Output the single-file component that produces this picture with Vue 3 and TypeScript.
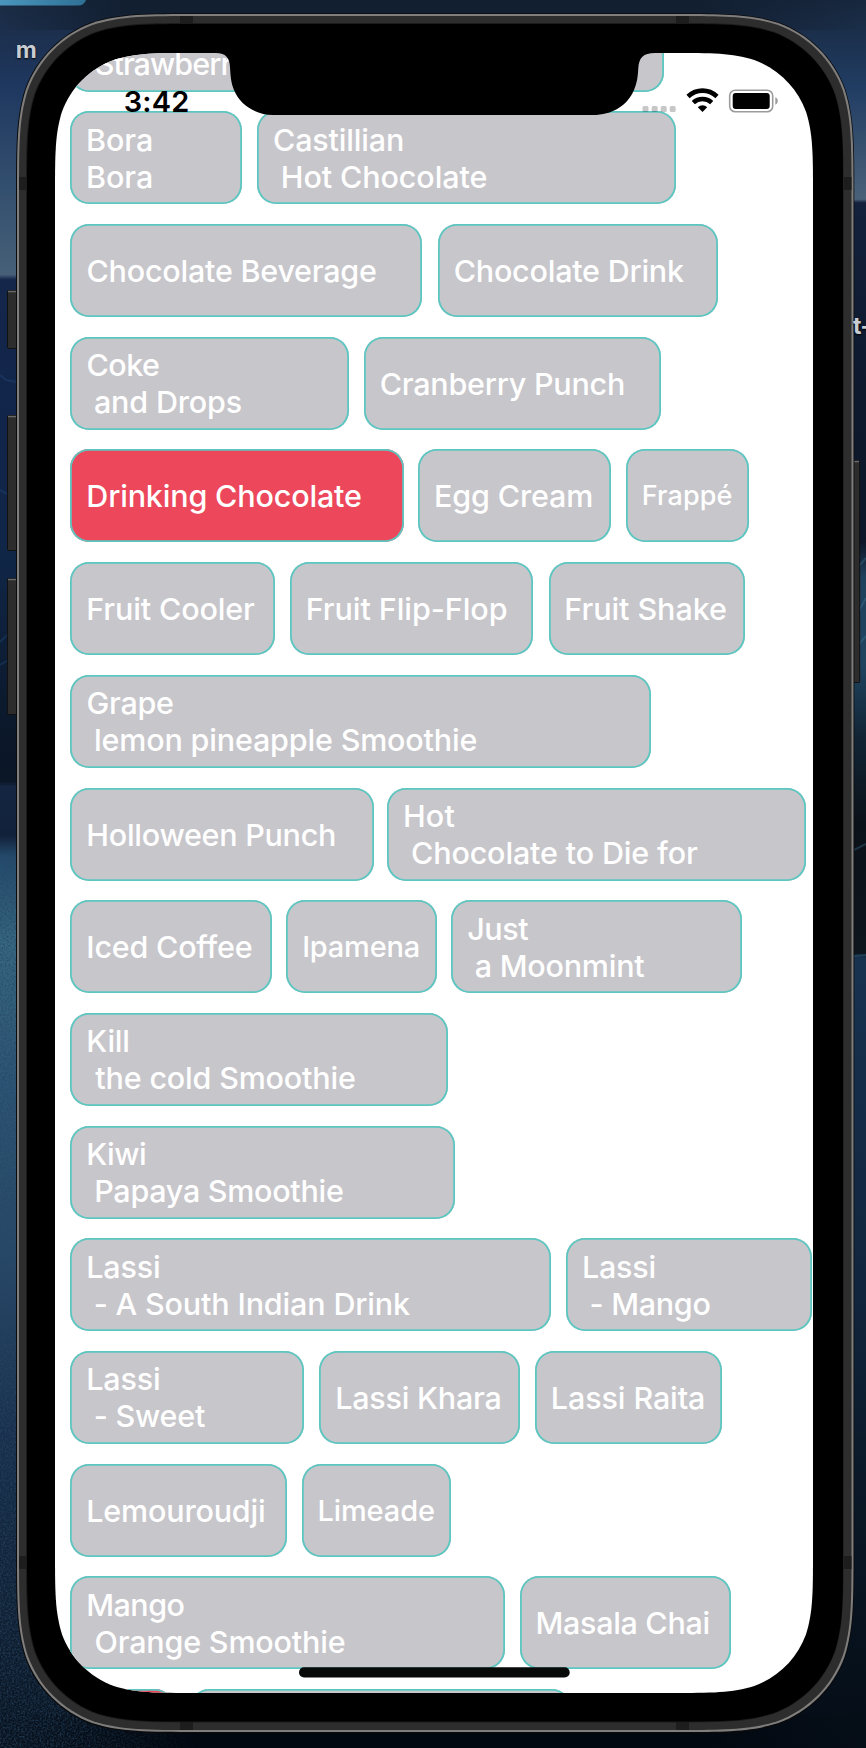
<script setup lang="ts">
import { onMounted, ref } from 'vue'

interface Line { text: string; start: number; end: number }
interface Chip { left: number; right: number; lines: Line[]; size: number; active: boolean }

const LIST_LEFT = 70.3

function chip(left: number, right: number, lines: [string, number, number][], size = 30.5, active = false): Chip {
  return { left, right, size, active, lines: lines.map(([text, start, end]) => ({ text, start, end })) }
}

const rows: Chip[][] = [
  [chip(70.3, 664, [['', 87.5, 158], [' Strawberry Smoothie', 95.7, 386]])],
  [
    chip(70.3, 242, [['Bora', 88, 152], ['Bora', 88, 152]]),
    chip(257, 676, [['Castillian', 274, 403], [' Hot Chocolate', 282.8, 486.5]]),
  ],
  [
    chip(70.3, 422.3, [['Chocolate Beverage', 87.5, 376]]),
    chip(438, 718, [['Chocolate Drink', 454.7, 684]]),
  ],
  [
    chip(70.3, 349.3, [['Coke', 87.5, 159], [' and Drops', 95, 241.7]]),
    chip(364, 661, [['Cranberry Punch', 380.7, 624]]),
  ],
  [
    chip(70.3, 404, [['Drinking Chocolate', 88.3, 361]], 30.5, true),
    chip(418.5, 611, [['Egg Cream', 436, 591.3]]),
    chip(626.5, 749, [['Frappé', 643.8, 731.5]], 27),
  ],
  [
    chip(70.3, 275, [['Fruit Cooler', 88.3, 255]]),
    chip(290, 533.5, [['Fruit Flip-Flop', 307.7, 506.7]]),
    chip(548.7, 745, [['Fruit Shake', 566.3, 726]]),
  ],
  [chip(70.3, 651, [['Grape', 87.5, 173], [' lemon pineapple Smoothie', 96, 476.5]])],
  [
    chip(70.3, 374, [['Holloween Punch', 88.3, 335]]),
    chip(387.3, 806, [['Hot', 404.9, 454.5], [' Chocolate to Die for', 412, 698]]),
  ],
  [
    chip(70.3, 272, [['Iced Coffee', 88.3, 251.7]]),
    chip(286.3, 437, [['Ipamena', 304.2, 418.7]], 29),
    chip(451.3, 742.5, [['Just', 468.3, 528.3], [' a Moonmint', 475.7, 644.3]]),
  ],
  [chip(70.3, 448, [['Kill', 88.3, 128.3], [' the cold Smoothie', 95.3, 355]])],
  [chip(70.3, 455.3, [['Kiwi', 88.3, 145], [' Papaya Smoothie', 96.2, 343]])],
  [
    chip(70.3, 551, [['Lassi', 88.3, 159], [' - A South Indian Drink', 95.7, 410]]),
    chip(566.3, 812, [['Lassi', 583.9, 654.5], [' - Mango', 591.5, 709.5]]),
  ],
  [
    chip(70.3, 304.4, [['Lassi', 88.3, 159], [' - Sweet', 95.7, 205]]),
    chip(319.3, 520.3, [['Lassi Khara', 337.2, 500.5]]),
    chip(535, 722, [['Lassi Raita', 552.9, 704.1]]),
  ],
  [
    chip(70.3, 287.3, [['Lemouroudji', 88.3, 264]]),
    chip(302, 451.3, [['Limeade', 319.5, 434]], 29),
  ],
  [
    chip(70.3, 505, [['Mango', 88.3, 183.5], [' Orange Smoothie', 95.5, 344.7]]),
    chip(520, 731.3, [['Masala Chai', 537.5, 708.5]]),
  ],
  [
    chip(70.3, 174, [], 30.5, true),
    chip(190, 571, []),
  ],
]

const chipStyle = (row: Chip[], i: number) => ({
  width: `${row[i].right - row[i].left}px`,
  marginLeft: `${row[i].left - (i ? row[i - 1].right : LIST_LEFT)}px`,
  fontSize: `${row[i].size}px`,
})

// Tracking is fitted so that each label spans its measured ink width.
const context = ref<CanvasRenderingContext2D | null>(null)

const lineStyle = (c: Chip, line: Line) => {
  const ctx = context.value
  const label = line.text.trimStart()
  if (!ctx || !label) return {}
  ctx.font = `500 ${c.size}px Inter`
  const m = ctx.measureText(label)
  const ink = m.actualBoundingBoxRight + m.actualBoundingBoxLeft
  const tracking = (line.end - line.start - ink) / (label.length - 1)
  const offset = line.start - c.left + m.actualBoundingBoxLeft
  return { letterSpacing: `${tracking.toFixed(3)}px`, paddingLeft: `${offset.toFixed(2)}px` }
}

onMounted(() => {
  context.value = document.createElement('canvas').getContext('2d')
})

// Rounded rectangle with continuous-curvature corners.
function squircle(x: number, y: number, w: number, h: number, r: number): string {
  const [a, b, c, d, e, f, g] = [1.5287, 1.0885, 0.8684, 0.6314, 0.3728, 0.169, 0.0749].map(k => k * r)
  const R = x + w
  const B = y + h
  return [
    `M${x + a} ${y}H${R - a}`,
    `C${R - b} ${y} ${R - c} ${y} ${R - d} ${y + g}C${R - e} ${y + f} ${R - f} ${y + e} ${R - g} ${y + d}C${R} ${y + c} ${R} ${y + b} ${R} ${y + a}`,
    `V${B - a}`,
    `C${R} ${B - b} ${R} ${B - c} ${R - g} ${B - d}C${R - f} ${B - e} ${R - e} ${B - f} ${R - d} ${B - g}C${R - c} ${B} ${R - b} ${B} ${R - a} ${B}`,
    `H${x + a}`,
    `C${x + b} ${B} ${x + c} ${B} ${x + d} ${B - g}C${x + e} ${B - f} ${x + f} ${B - e} ${x + g} ${B - d}C${x} ${B - c} ${x} ${B - b} ${x} ${B - a}`,
    `V${y + a}`,
    `C${x} ${y + b} ${x} ${y + c} ${x + g} ${y + d}C${x + f} ${y + e} ${x + e} ${y + f} ${x + d} ${y + g}C${x + c} ${y} ${x + b} ${y} ${x + a} ${y}Z`,
  ].join('')
}

const screenClip = { clipPath: `path('${squircle(0, 0, 758, 1640, 93)}')` }
</script>

<template>
  <main class="desktop">
    <svg class="backdrop" width="866" height="1748" viewBox="0 0 866 1748">
      <defs>
        <linearGradient id="leftSky" x1="0" y1="0" x2="0" y2="1">
          <stop offset="0" stop-color="#1a2a42" />
          <stop offset=".05" stop-color="#1f3860" />
          <stop offset=".11" stop-color="#34506f" />
          <stop offset=".157" stop-color="#476078" />
          <stop offset=".16" stop-color="#14264a" />
          <stop offset=".24" stop-color="#11254a" />
          <stop offset=".32" stop-color="#102647" />
          <stop offset=".4" stop-color="#0c1a2e" />
          <stop offset=".447" stop-color="#0b1626" />
          <stop offset=".45" stop-color="#142642" />
          <stop offset=".478" stop-color="#12213a" />
          <stop offset=".49" stop-color="#234a6b" />
          <stop offset=".54" stop-color="#376882" />
          <stop offset=".62" stop-color="#2c5575" />
          <stop offset=".72" stop-color="#284868" />
          <stop offset=".82" stop-color="#182f4c" />
          <stop offset=".93" stop-color="#0f1f32" />
          <stop offset="1" stop-color="#08111d" />
        </linearGradient>
        <linearGradient id="rightSky" x1="0" y1="0" x2="0" y2="1">
          <stop offset="0" stop-color="#17273d" />
          <stop offset=".05" stop-color="#213d63" />
          <stop offset=".114" stop-color="#4a6179" />
          <stop offset=".116" stop-color="#14213c" />
          <stop offset=".2" stop-color="#0e1a2f" />
          <stop offset=".31" stop-color="#0c1628" />
          <stop offset=".33" stop-color="#1f405c" />
          <stop offset=".38" stop-color="#1f4460" />
          <stop offset=".42" stop-color="#122536" />
          <stop offset=".47" stop-color="#0b1119" />
          <stop offset=".545" stop-color="#0d151d" />
          <stop offset=".548" stop-color="#17324f" />
          <stop offset=".62" stop-color="#152c48" />
          <stop offset=".74" stop-color="#11253d" />
          <stop offset=".85" stop-color="#0a1827" />
          <stop offset="1" stop-color="#050d16" />
        </linearGradient>
        <linearGradient id="tab" x1="0" y1="0" x2="1" y2="0">
          <stop offset="0" stop-color="#4a96bd" />
          <stop offset="1" stop-color="#2f7095" />
        </linearGradient>
        <linearGradient id="topEdge" x1="0" y1="0" x2="1" y2="0">
          <stop offset="0" stop-color="#121f31" stop-opacity="0" />
          <stop offset=".15" stop-color="#121f31" />
          <stop offset=".8" stop-color="#121f31" />
          <stop offset="1" stop-color="#121f31" stop-opacity="0" />
        </linearGradient>
        <linearGradient id="bottomEdge" x1="0" y1="0" x2="1" y2="0">
          <stop offset="0" stop-color="#020810" stop-opacity="0" />
          <stop offset=".2" stop-color="#020810" />
          <stop offset=".8" stop-color="#020810" />
          <stop offset="1" stop-color="#020810" stop-opacity="0" />
        </linearGradient>
        <linearGradient id="grainFade" x1="0" y1="0" x2="1" y2="0">
          <stop offset=".3" stop-color="#fff" />
          <stop offset="1" stop-color="#000" />
        </linearGradient>
        <mask id="grainMask">
          <rect y="855" width="200" height="893" fill="url(#grainFade)" />
        </mask>
        <filter id="grain" x="0" y="0" width="1" height="1">
          <feTurbulence type="fractalNoise" baseFrequency=".55" numOctaves="2" seed="4" />
          <feColorMatrix values="0 0 0 0 .02  0 0 0 0 .06  0 0 0 0 .12  1.6 0 0 0 -.6" />
        </filter>
      </defs>
      <rect width="433" height="1748" fill="url(#leftSky)" />
      <rect x="433" width="433" height="1748" fill="url(#rightSky)" />
      <rect width="866" height="30" fill="url(#topEdge)" />
      <rect y="1715" width="866" height="33" fill="url(#bottomEdge)" />
      <path d="M0 375L6 380L17 382M0 490L9 495L17 494M0 642L8 634L17 630M0 665L17 655" fill="none" stroke="#2a568a" stroke-width="2" opacity=".3" />
      <path d="M854 572l12-14M854 620l12-22M854 650l12-14M854 850l12-6M854 956l12-1" fill="none" stroke="#4685a6" stroke-width="2" opacity=".3" />
      <g mask="url(#grainMask)">
        <rect y="855" width="200" height="893" filter="url(#grain)" />
      </g>
      <path d="M0 0H86Q84 5.500 78 5.500H0Z" fill="url(#tab)" />

      <g fill="#2c2c2c" stroke="#111" stroke-width="1">
        <rect x="7.500" y="290.500" width="12" height="58" rx="1" />
        <rect x="7.500" y="415.500" width="12" height="135" rx="1" />
        <rect x="7.500" y="578.500" width="12" height="136" rx="1" />
        <rect x="850" y="460.500" width="9.700" height="222" rx="1" />
      </g>
      <path d="M8 291.500h9M8 416.500h9M8 579.500h9M854 461.500h5" stroke="#6a6a6a" stroke-width="1.500" />

      <path :d="squircle(16, 13.300, 838.300, 1720, 120)" fill="#0b0b0c" />
      <path :d="squircle(17, 14, 836.500, 1718, 119)" fill="#7f7e7d" />
      <path :d="squircle(19, 16, 832.500, 1714, 117.500)" fill="#2d2d2d" />
      <path d="M180 16h13v9h-13zM676 16h13v9h-13zM180 1721h13v9h-13zM676 1721h13v9h-13zM19 177h8v13h-8zM844 177h7.500v13h-7.500zM19 1556h8v13h-8zM844 1556h7.500v13h-7.500z" fill="#1d1d1d" />
      <path :d="squircle(26, 23, 817.500, 1699.500, 112)" fill="#1b1b1b" />
      <path :d="squircle(27, 24, 816, 1697.500, 111)" fill="#000" />
    </svg>

    <span class="desk-label desk-label-left">m</span>
    <span class="desk-label desk-label-right">t-</span>

    <section class="screen" :style="screenClip">
      <div class="list">
        <div v-for="(row, r) in rows" :key="r" class="row">
          <div
            v-for="(c, i) in row"
            :key="i"
            class="chip"
            :class="{ active: c.active }"
            :style="chipStyle(row, i)"
          >
            <span v-for="(line, l) in c.lines" :key="l" class="line" :style="lineStyle(c, line)">{{ line.text.trimStart() }}</span>
          </div>
        </div>
      </div>

      <svg class="overlay" width="758" height="1640" viewBox="55 53 758 1640">
        <path d="M214 52H655V53C643 53 639 58 638.300 68C638 76 637 83 634 90C627 106 612 115 593 115H273C256 115 240 105 234 90C231 83 230.500 76 230 67C229.500 58 226 53 216 53Z" fill="#000" />
        <g fill="#000" fill-opacity=".22">
          <rect x="642.500" y="106" width="6" height="6" rx="1.500" />
          <rect x="651.700" y="106" width="6" height="6" rx="1.500" />
          <rect x="660.700" y="106" width="6" height="6" rx="1.500" />
          <rect x="669.700" y="106" width="6" height="6" rx="1.500" />
        </g>
        <g fill="none" stroke="#000" stroke-width="4.600">
          <path d="M688 96.500C696.500 88.700 708.500 88.700 717 96.500" />
          <path d="M693.300 102.600C698.500 97.800 706.500 97.800 711.700 102.600" />
        </g>
        <path d="M697.800 107.300C700.400 104.600 704.600 104.600 707.200 107.300L702.500 112Z" fill="#000" />
        <rect x="729.700" y="90.200" width="43" height="21.600" rx="5.500" fill="#fff" stroke="#9b9b9b" stroke-width="1.600" />
        <rect x="732.700" y="93" width="37" height="16" rx="3" fill="#000" />
        <path d="M775.300 97.300C778.600 98.500 778.600 103.500 775.300 104.700Z" fill="#9b9b9b" />
        <rect x="299" y="1667.200" width="270.700" height="10.300" rx="5" fill="#080a0a" />
      </svg>
      <span class="clock">3:42</span>
    </section>
  </main>
</template>

<style>
body {
  margin: 0;
  background: #0a1524;
}
</style>

<style scoped>
.desktop {
  position: relative;
  box-sizing: border-box;
  width: 866px;
  height: 1748px;
  padding: 53px 53px 55px 55px;
  overflow: hidden;
  font-family: Inter, "Liberation Sans", sans-serif;
}

.backdrop,
.overlay {
  position: absolute;
  top: 0;
  left: 0;
  display: block;
}

.screen {
  position: relative;
  width: 758px;
  height: 1640px;
  overflow: hidden;
  background: #fff;
}

.list {
  display: flex;
  flex-direction: column;
  gap: 19.7px;
  margin-top: -54.3px;
  padding-left: 15.3px;
}

.row {
  display: flex;
  flex: none;
  height: 93px;
}

.chip {
  display: flex;
  flex: none;
  flex-direction: column;
  justify-content: center;
  box-sizing: border-box;
  height: 93px;
  border-radius: 19px;
  background: #c7c6cb;
  box-shadow: inset 0 0 0 1.8px #5cc7c1;
  color: #fff;
  font-weight: 500;
  line-height: 37px;
}

.chip.active {
  background: #ec475b;
}

.line {
  display: block;
  min-height: 37px;
  white-space: pre;
}

.clock {
  position: absolute;
  top: 29.5px;
  left: 68.7px;
  color: #000;
  font-size: 29px;
  font-weight: 600;
  line-height: 37px;
  letter-spacing: 0.2px;
}

.desk-label {
  position: absolute;
  color: #c9cdd2;
  font-size: 23px;
  font-weight: 700;
  line-height: 28px;
  text-shadow: 0 1px 2px #000;
}

.desk-label-left {
  top: 36px;
  left: 15.7px;
}

.desk-label-right {
  top: 312px;
  left: 853px;
  letter-spacing: -0.5px;
}
</style>
